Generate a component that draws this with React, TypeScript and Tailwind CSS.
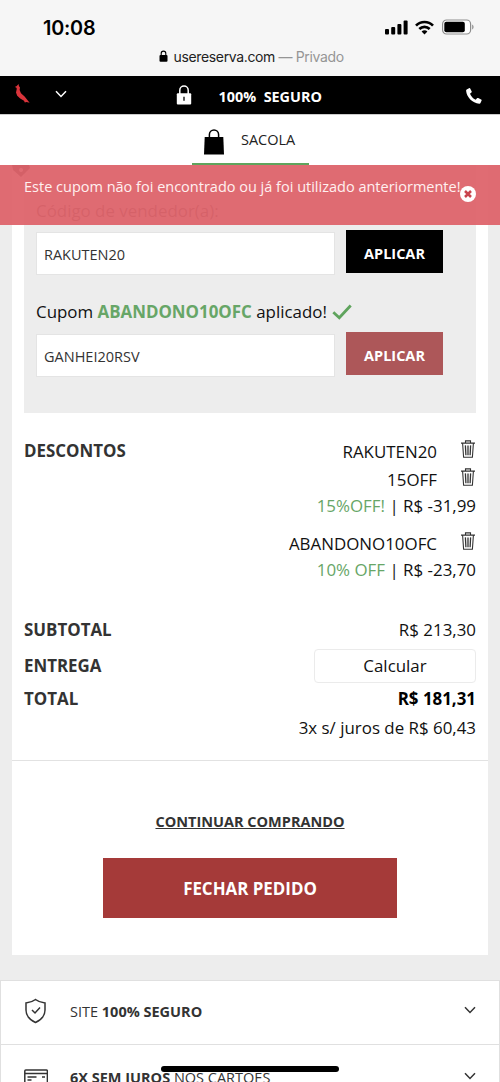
import type { ReactNode } from "react";

function ChevronDown({ className }: { className?: string }) {
  return (
    <svg viewBox="0 0 12 8" className={className} fill="none" stroke="currentColor" strokeWidth="1.5">
      <path d="M1 1.2 6 6.4 11 1.2" />
    </svg>
  );
}

function Trash() {
  return (
    <svg viewBox="0 0 14 18" className="h-[18px] w-3.5" fill="none" stroke="#333" strokeWidth="1.1">
      <path d="M0 3.1h14M4.5 3V.9h5V3M1.6 3.3l1 14h8.8l1-14" />
      <path d="M4.4 5.4l.5 9.8M7 5.4v9.8M9.6 5.4l-.5 9.8" strokeWidth="1.3" />
    </svg>
  );
}

function StatusBar() {
  return (
    <div className="h-[76px] bg-[#f6f6f6] font-['Inter']">
      <div className="flex h-[47px] items-end justify-between pr-[26px] pl-[43px]">
        <span className="mb-1 text-[19.8px] leading-[29px] font-semibold tracking-[-0.2px] text-black">10:08</span>
        <div className="mb-3 flex items-end">
          <svg viewBox="0 0 23 15" className="h-[15px] w-[23px]">
            <rect x="0" y="9" width="4" height="5.5" rx="1" />
            <rect x="6.2" y="7" width="4" height="7.5" rx="1" />
            <rect x="12.4" y="4" width="4" height="10.5" rx="1" />
            <rect x="18.6" y="0.5" width="4" height="14" rx="1" />
          </svg>
          <svg viewBox="0 0 19 15" className="ml-[7.5px] h-[15px] w-[19px]" fill="none" stroke="#000" strokeWidth="2.7">
            <path d="M1 5.6C5.8.8 13.2.8 18 5.6" />
            <path d="M4.3 9c3-2.9 7.4-2.9 10.4 0" />
            <path d="M6.6 11.4c1.7-1.6 4.1-1.6 5.8 0L9.5 14.5z" fill="#000" stroke="none" />
          </svg>
          <svg viewBox="0 0 32 16" className="ml-2 h-4 w-8">
            <rect x="0.6" y="1" width="28" height="14" rx="4" fill="#fff" stroke="#8d8d8d" strokeWidth="1.2" />
            <rect x="2.3" y="2.8" width="20.5" height="10.4" rx="2" />
            <path d="M30.2 5.5c1.8.8 1.8 4.2 0 5z" fill="#8d8d8d" />
          </svg>
        </div>
      </div>
      <div className="-mt-px flex h-5 items-center pl-[158.5px] text-[14px] tracking-[-0.35px] whitespace-nowrap">
        <svg viewBox="0 0 9 12" className="-mt-px mr-[6px] h-3 w-[9px]">
          <rect x="0.5" y="5" width="8" height="6.7" rx="1" />
          <path d="M2.2 5.5V3.4a2.3 2.3 0 0 1 4.6 0v2.1" fill="none" stroke="#000" strokeWidth="1.1" />
        </svg>
        <span className="text-[#222]">usereserva.com</span>
        <span className="ml-[3.5px] text-[#959595]">— Privado</span>
      </div>
    </div>
  );
}

function TopNav() {
  return (
    <div className="flex h-[38px] items-center bg-black text-white">
      <svg viewBox="0 0 16 20" className="-mt-0.5 ml-[14px] h-5 w-4 shrink-0" fill="#d9343b">
        <path d="M4.6 0 4.9 2.1 6 3.5 5.6 6 7 9.200 10.600 12.600 13 15.600 15.600 18.800 12.600 18 10.800 18.500 10 16.800 6.200 14.600 3.200 11.800 2 8.400 2.800 4.800 2.200 3.500.800 3.100 2.700 1.900z" />
      </svg>
      <ChevronDown className="-mt-0.5 ml-[25px] h-2 w-3 shrink-0" />
      <svg viewBox="0 0 16 20" className="-mt-px ml-[109px] h-5 w-4 shrink-0">
        <path d="M3.8 9V5.3a4.2 4.2 0 0 1 8.4 0V9" fill="none" stroke="#fff" strokeWidth="1.5" />
        <rect x="0.8" y="8.2" width="14.4" height="11.2" rx="1" fill="#fff" />
        <path d="M8 11.8v4" stroke="#000" strokeWidth="1.3" />
      </svg>
      <span className="mt-[3px] ml-[26.5px] text-[14.4px] font-bold whitespace-pre">100%  SEGURO</span>
      <svg viewBox="0 0 16 16" className="mt-0.5 mr-[18px] ml-auto h-4 w-4 shrink-0" fill="#fff">
        <path d="M.7 1.5 3 .2c.5-.3 1 0 1.2.4l1.5 2.8c.2.5.1.9-.3 1.2L4 5.8c1 2.6 3 4.8 5.7 6l1.3-1.5c.3-.4.8-.5 1.2-.3l2.9 1.4c.5.2.7.7.5 1.2l-1.1 2.4c-.2.5-.7.8-1.2.7C6.2 14.9.8 9.3.1 2.7c0-.5.2-1 .6-1.2z" />
      </svg>
    </div>
  );
}

function BagTab() {
  return (
    <div className="flex h-[51px] justify-center border-t border-[#ccc] bg-white">
      <div className="flex w-[117px] items-center border-b-2 border-[#5fa45d] pl-3">
        <svg viewBox="0 0 20 26" className="mt-1.5 h-[26px] w-5 shrink-0">
          <path d="M.7 8h18.6l.7 17.5H0z" />
          <path d="M5.4 11V5.5a4.6 4.6 0 0 1 9.2 0V11" fill="none" stroke="#000" strokeWidth="1.5" />
        </svg>
        <span className="mt-0.5 ml-[17.5px] text-[14.5px] text-[#222]">SACOLA</span>
      </div>
    </div>
  );
}

function CouponAlert() {
  return (
    <div className="absolute inset-x-0 top-0 h-[60px] bg-[#de646b]/95">
      <p className="pt-3 pl-6 text-[14.5px] leading-5 whitespace-nowrap text-[#fff0f0]">
        Este cupom não foi encontrado ou já foi utilizado anteriormente!
      </p>
      <svg viewBox="0 0 16 16" className="absolute top-[20.5px] left-[460px] h-4 w-4">
        <circle cx="8" cy="8" r="8" fill="#fff" />
        <path d="m5 5 6 6m0-6-6 6" stroke="#c9444d" strokeWidth="2.5" />
      </svg>
    </div>
  );
}

function CodeField({ code, buttonClass }: { code: string; buttonClass: string }) {
  return (
    <div className="flex items-end">
      <div className="flex h-[43px] w-[299px] items-center border border-[#e4e4e4] bg-white pt-0.5 pl-[7px] text-[14.5px] text-[#333]">
        {code}
      </div>
      <button className={`mb-0.5 ml-[11px] h-[43px] w-[97px] pt-1 text-[14.5px] font-bold text-white ${buttonClass}`}>APLICAR</button>
    </div>
  );
}

function DiscountLine({ className, children }: { className: string; children: ReactNode }) {
  return (
    <div className={`flex items-center justify-end pr-[1.5px] ${className}`}>
      <span>{children}</span>
      <span className="-mt-1.5 ml-[23.5px]">
        <Trash />
      </span>
    </div>
  );
}

function Discounts() {
  return (
    <div className="mt-[25px] flex h-[146px] justify-between">
      <strong className="leading-[25px] text-[#333]">DESCONTOS</strong>
      <div className="text-right">
        <DiscountLine className="h-7">RAKUTEN20</DiscountLine>
        <DiscountLine className="h-[27px]">15OFF</DiscountLine>
        <p className="h-[26px] leading-[26px]">
          <span className="text-[#67a667]">15%OFF!</span> | R$ -31,99
        </p>
        <DiscountLine className="mt-[11px] h-7">ABANDONO10OFC</DiscountLine>
        <p className="-mt-px h-[26px] leading-[26px]">
          <span className="text-[#67a667]">10% OFF</span> | R$ -23,70
        </p>
      </div>
    </div>
  );
}

function Totals() {
  return (
    <div className="mt-[33px]">
      <div className="flex h-[26px] items-center justify-between">
        <strong className="text-[#333]">SUBTOTAL</strong>
        <span>R$ 213,30</span>
      </div>
      <div className="mt-1.5 flex h-[34px] items-center justify-between">
        <strong className="text-[#333]">ENTREGA</strong>
        <button className="h-[34px] w-[162px] rounded border border-[#ebebeb]">Calcular</button>
      </div>
      <div className="mt-[3px] flex h-[26px] items-center justify-between">
        <strong className="text-[#333]">TOTAL</strong>
        <strong className="text-black">R$ 181,31</strong>
      </div>
      <p className="mt-[3px] h-[26px] text-right leading-[26px]">3x s/ juros de R$ 60,43</p>
    </div>
  );
}

function InfoRow({ icon, className, children }: { icon: ReactNode; className: string; children: ReactNode }) {
  return (
    <div className={`flex h-[65px] items-center border border-[#e0e0e0] bg-white pr-[23px] pl-[22px] text-[14.5px] text-[#333] ${className}`}>
      {icon}
      <span className="ml-[23px] whitespace-nowrap">{children}</span>
      <ChevronDown className="-mt-1 ml-auto h-2 w-3 shrink-0" />
    </div>
  );
}

export default function App() {
  return (
    <div className="relative h-[1082px] w-[500px] overflow-hidden bg-[#ededed] font-['Open_Sans',sans-serif]">
      <StatusBar />
      <TopNav />
      <BagTab />

      <div className="relative">
        <main className="mx-3 h-[790px] bg-white text-[16.9px] text-[#111]">
          <div className="px-3">
            <section className="h-[248px] bg-[#ededed] pl-3">
              <div className="h-[34px]">
                <svg viewBox="0 0 18 12" className="-ml-6 h-3 w-[18px]" fill="#222">
                  <path d="M0 0h17l1 3-9 9-8-7zm9 3a2 2 0 1 0 .1 0z" fillRule="evenodd" />
                </svg>
              </div>
              <p className="leading-6 text-[#333]">Código de vendedor(a):</p>
              <div className="mt-[7px]">
                <CodeField code="RAKUTEN20" buttonClass="bg-black" />
              </div>
              <p className="mt-[26px] flex h-[22px] items-center whitespace-pre">
                Cupom <strong className="text-[#67a667]">ABANDONO10OFC</strong> aplicado!
                <svg viewBox="0 0 20 16" className="ml-[5px] h-4 w-5" fill="none" stroke="#5fa45d" strokeWidth="2.8">
                  <path d="m1.3 8.2 6 5.5L18.7 1.5" />
                </svg>
              </p>
              <div className="mt-[9px]">
                <CodeField code="GANHEI20RSV" buttonClass="bg-[#ad5759]" />
              </div>
            </section>
            <Discounts />
            <Totals />
          </div>
          <div className="mt-[19px] flex flex-col items-center border-t border-[#e2e2e2]">
            <a className="mt-[50px] text-[14.5px] leading-[22px] font-bold text-[#333] underline">CONTINUAR COMPRANDO</a>
            <button className="mt-[25px] h-[60px] w-[294px] bg-[#a53a39] pt-px font-bold text-white">FECHAR PEDIDO</button>
          </div>
        </main>
        <CouponAlert />
      </div>

      <div className="mt-[25px]">
        <InfoRow
          className="pb-0.5"
          icon={
            <svg viewBox="0 0 24 26" className="-mt-0.5 h-[26px] w-6 shrink-0" fill="none" stroke="#333" strokeWidth="1.5">
              <path d="M12.500 1.500c2.500 2 5.500 3 9.500 3.500v7c0 6-4 10-9.500 12.500C7 22 3 18 3 12V5c4-.5 7-1.500 9.500-3.500z" />
              <path d="m9 12 3 3 5-5.400" />
            </svg>
          }
        >
          SITE <strong>100% SEGURO</strong>
        </InfoRow>
        <InfoRow
          className="border-t-0 pt-0.5"
          icon={
            <svg viewBox="0 0 24 22" className="mt-0.5 ml-px -mr-px h-[22px] w-6 shrink-0" fill="none" stroke="#333" strokeWidth="1.5">
              <rect x="0.8" y="2" width="22.6" height="17" rx="1" />
              <path d="M1 5.500h22M3.500 9h9M3.500 12h4M18 9h3" />
            </svg>
          }
        >
          <strong>6X SEM JUROS</strong> NOS CARTÕES
        </InfoRow>
      </div>

      <div className="absolute top-[1066px] left-[161px] h-[6px] w-[178px] rounded-full bg-black" />
    </div>
  );
}
